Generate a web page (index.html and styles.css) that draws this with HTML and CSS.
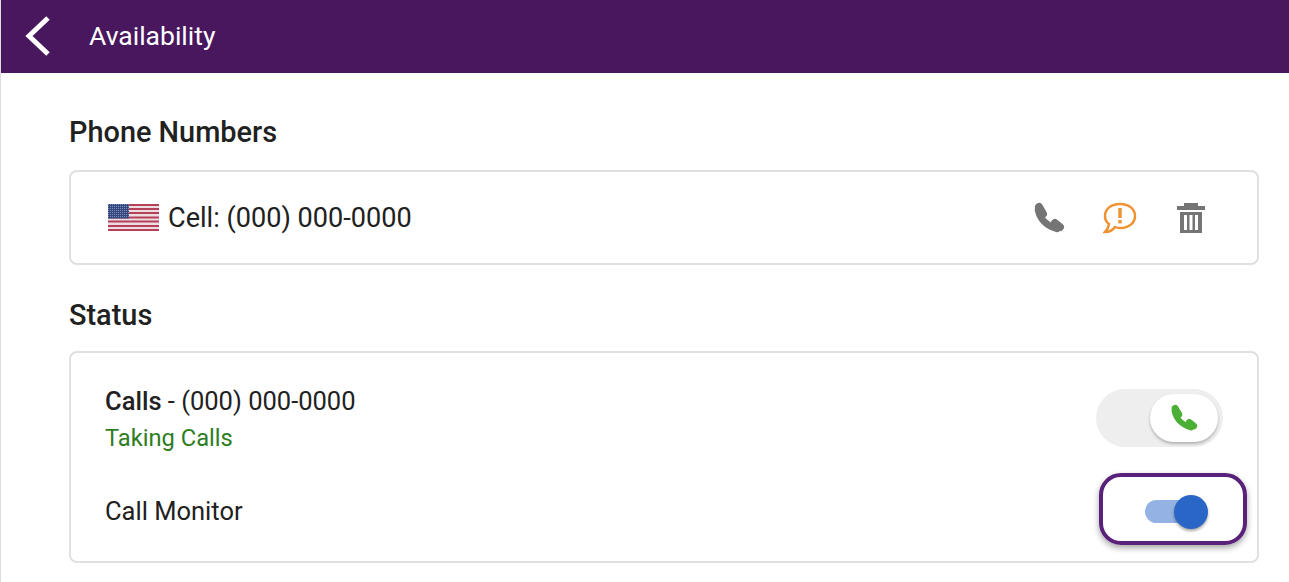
FILE: index.html
```html
<!DOCTYPE html>
<html>
<head>
	<title>Availability</title>
	<link rel="stylesheet" href="styles.css">
</head>
<body>
	<div class="topbar">
		<svg class="back" viewBox="0 0 26 40"><path d="M23 2 L4 20 L23 38" fill="none" stroke="#fff" stroke-width="5"/></svg>
		<span class="title">Availability</span>
	</div>

	<div class="content">
		<h2 class="heading">Phone Numbers</h2>
		<div class="card phone-card">
			<svg class="flag" viewBox="0 0 51 27">
				<defs>
					<pattern id="stars" width="2" height="2" patternUnits="userSpaceOnUse">
						<rect width="1" height="1" fill="#7f8fb5"/>
					</pattern>
				</defs>
				<rect width="51" height="27" fill="#eedde0"/>
				<g fill="#b5405a">
					<rect y="0" width="51" height="2"/>
					<rect y="4" width="51" height="2"/>
					<rect y="8" width="51" height="2"/>
					<rect y="12.5" width="51" height="2"/>
					<rect y="16.5" width="51" height="2"/>
					<rect y="21" width="51" height="2"/>
					<rect y="25" width="51" height="2"/>
				</g>
				<rect width="21" height="14.5" fill="#34497f"/>
				<rect width="21" height="14.5" fill="url(#stars)"/>
			</svg>
			<span class="number">Cell: (000) 000-0000</span>
			<div class="actions">
				<svg class="icon" viewBox="0 0 32 32">
					<g fill="none" stroke="#757575" stroke-linecap="round">
						<path d="M5 8 Q8 22 24 27" stroke-width="6.500"/>
						<path d="M6 5 L10 12" stroke-width="8"/>
						<path d="M22 21 L27 25" stroke-width="8"/>
					</g>
				</svg>
				<svg class="icon icon-wide" viewBox="0 0 34 32">
					<path d="M17 2 C26 2 32 7 32 14 C32 21 26 26 17 26 C15 26 14 26 12 25 C10 28 6 30 2 30 C4 28 5.500 26 6 22 C3 20 2 17 2 14 C2 7 8 2 17 2 Z" fill="none" stroke="#ef9231" stroke-width="2.500"/>
					<rect x="15.300" y="6" width="3.400" height="10" fill="#ef9231"/>
					<rect x="15.300" y="18" width="3.400" height="3.400" fill="#ef9231"/>
				</svg>
				<svg class="icon" viewBox="0 0 30 32">
					<g fill="#757575">
						<rect x="8" y="1" width="14" height="4"/>
						<rect x="1" y="4" width="28" height="4"/>
						<path d="M4 10 H26 V31 H4 Z M8 13 V28 H11 V13 Z M13.500 13 V28 H16.500 V13 Z M19 13 V28 H22 V13 Z" fill-rule="evenodd"/>
					</g>
				</svg>
			</div>
		</div>

		<h2 class="heading heading-status">Status</h2>
		<div class="card status-card">
			<div class="row calls-row">
				<div>
					<div class="line"><b>Calls</b> - (000) 000-0000</div>
					<div class="line taking">Taking Calls</div>
				</div>
				<div class="call-toggle">
					<div class="call-knob">
						<svg class="knob-icon" viewBox="0 0 32 32">
							<g fill="none" stroke="#4caf35" stroke-linecap="round">
								<path d="M5 8 Q8 22 24 27" stroke-width="6.500"/>
								<path d="M6 5 L10 12" stroke-width="8"/>
								<path d="M22 21 L27 25" stroke-width="8"/>
							</g>
						</svg>
					</div>
				</div>
			</div>
			<div class="row monitor-row">
				<span class="line monitor-label">Call Monitor</span>
				<div class="focus-ring">
					<div class="switch">
						<div class="switch-knob"></div>
					</div>
				</div>
			</div>
		</div>
	</div>
</body>
</html>
```

FILE: styles.css
```css
html, body {
	margin: 0;
	height: 100%;
	overflow: hidden;
}
body {
	font-family: Roboto, sans-serif;
	color: #212121;
	background-color: #fff;
	border-left: 1px solid #ddd;
}
.topbar {
	height: 73px;
	background-color: #49175e;
	display: flex;
	align-items: center;
	padding-left: 24px;
}
.back {
	width: 26px;
	height: 40px;
	margin-right: 38px;
	margin-top: -1px;
}
.title {
	font-size: 26.500px;
	font-weight: 400;
	color: #fff;
	margin-top: -2px;
}
.content {
	padding: 0 30px 0 68px;
}
.heading {
	font-size: 28.900px;
	font-weight: 500;
	line-height: 32px;
	margin: 0;
	padding-top: 43px;
	padding-bottom: 22px;
}
.heading-status {
	padding-top: 31px;
	padding-bottom: 20px;
}
.card {
	border: 2px solid #e0e0e0;
	border-radius: 8px;
	box-sizing: border-box;
}
.phone-card {
	height: 95px;
	display: flex;
	align-items: center;
	padding: 0 50px 0 37px;
	margin-bottom: 3px;
}
.flag {
	width: 51px;
	height: 27px;
	margin-right: 9px;
}
.number {
	font-size: 27.100px;
}
.actions {
	margin-left: auto;
	display: flex;
	align-items: center;
	gap: 38px;
}
.icon {
	width: 32px;
	height: 32px;
}
.icon-wide {
	width: 34px;
}
.status-card {
	height: 212px;
	padding: 30px 34px 0 34px;
}
.row {
	display: flex;
	justify-content: space-between;
}
.line {
	font-size: 25.500px;
	line-height: 37px;
}
.line b {
	font-weight: 500;
}
.taking {
	font-size: 23.700px;
	color: #2e7d1e;
}
.call-toggle {
	width: 127px;
	height: 58px;
	margin-top: 6px;
	border-radius: 29px;
	background-color: #eee;
	display: flex;
	justify-content: flex-end;
	align-items: center;
	padding-right: 5px;
	box-sizing: border-box;
}
.call-knob {
	width: 68px;
	height: 48px;
	border-radius: 24px;
	background-color: #fff;
	box-shadow: 0 2px 3px rgba(0, 0, 0, 0.25);
	display: flex;
	align-items: center;
	justify-content: center;
}
.knob-icon {
	width: 28px;
	height: 28px;
}
.monitor-row {
	align-items: center;
	margin-top: 16px;
}
.monitor-label {
	padding-top: 5px;
}
.focus-ring {
	width: 148px;
	height: 72px;
	border: 4px solid #59217a;
	border-radius: 22px;
	box-sizing: border-box;
	box-shadow: 0 3px 6px rgba(0, 0, 0, 0.35);
	display: flex;
	align-items: center;
	justify-content: center;
	margin-right: -24px;
	padding-left: 4px;
}
.switch {
	width: 60px;
	height: 23px;
	margin-top: 5px;
	border-radius: 12px;
	background-color: #94b3e4;
	position: relative;
}
.switch-knob {
	position: absolute;
	right: -3px;
	top: -5px;
	width: 34px;
	height: 34px;
	border-radius: 50%;
	background-color: #2a66c6;
	box-shadow: 0 2px 3px rgba(0, 0, 0, 0.35);
}
```
